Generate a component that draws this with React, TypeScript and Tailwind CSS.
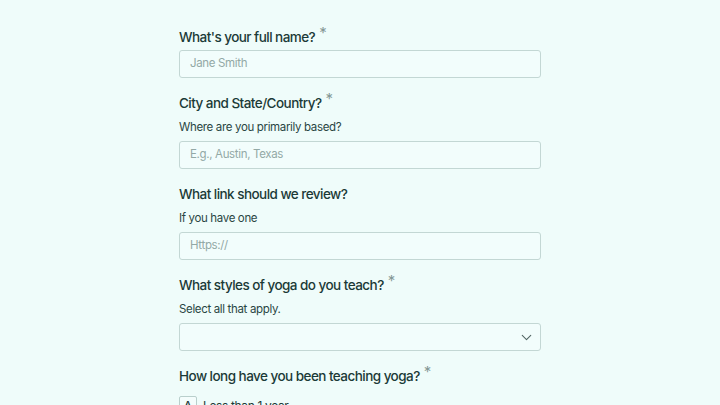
import { ChevronDown } from "lucide-react";

const font = { fontFamily: "Inter, 'Noto Sans', sans-serif" };

function Label({ text, required = false }: { text: string; required?: boolean }) {
  return (
    <p className="h-5 text-[13.5px] leading-5 font-medium tracking-[-0.04em] text-[#1b3a37]">
      {text}
      {required ? <span className="relative -top-[4px] ml-[4px] text-[15px] font-normal text-[#859896]">*</span> : null}
    </p>
  );
}

function Hint({ text }: { text: string }) {
  return <p className="mt-[6px] h-4 text-[11.5px] leading-4 tracking-[-0.03em] text-[#2a4643]">{text}</p>;
}

function TextBox({ placeholder }: { placeholder: string }) {
  return (
    <div className="flex h-7 items-center rounded-[3px] border border-[#c3d7d4] bg-[#f2fdfc] px-[10px] text-[11.5px] tracking-[-0.03em] text-[#93a9a6]">
      {placeholder}
    </div>
  );
}

export default function App() {
  return (
    <div className="h-[405px] w-[720px] overflow-hidden bg-[#effcfa]" style={font}>
      <div className="mx-auto w-[362px] pt-[27px]">
        <div>
          <Label text="What's your full name?" required />
          <div className="mt-[3px]">
            <TextBox placeholder="Jane Smith" />
          </div>
        </div>

        <div className="mt-[15px]">
          <Label text="City and State/Country?" required />
          <Hint text="Where are you primarily based?" />
          <div className="mt-[6px]">
            <TextBox placeholder="E.g., Austin, Texas" />
          </div>
        </div>

        <div className="mt-[15px]">
          <Label text="What link should we review?" />
          <Hint text="If you have one" />
          <div className="mt-[6px]">
            <TextBox placeholder="Https://" />
          </div>
        </div>

        <div className="mt-[15px]">
          <Label text="What styles of yoga do you teach?" required />
          <Hint text="Select all that apply." />
          <div className="mt-[6px] flex h-7 items-center justify-end rounded-[3px] border border-[#c3d7d4] bg-[#f2fdfc] pr-[5px]">
            <ChevronDown className="h-[17px] w-[17px] text-[#526664]" strokeWidth={1.5} />
          </div>
        </div>

        <div className="mt-[15px]">
          <Label text="How long have you been teaching yoga?" required />
          <div className="mt-[10px] flex items-start gap-[6px]">
            <span className="flex h-[18px] w-[18px] items-center justify-center rounded-[2px] border border-[#b9cfcc] bg-[#f4fdfc] text-[11px] font-medium text-[#1d3b38]">
              A
            </span>
            <span className="pt-[2px] text-[12px] leading-4 tracking-[-0.03em] text-[#1d3b38]">Less than 1 year</span>
          </div>
        </div>
      </div>
    </div>
  );
}
